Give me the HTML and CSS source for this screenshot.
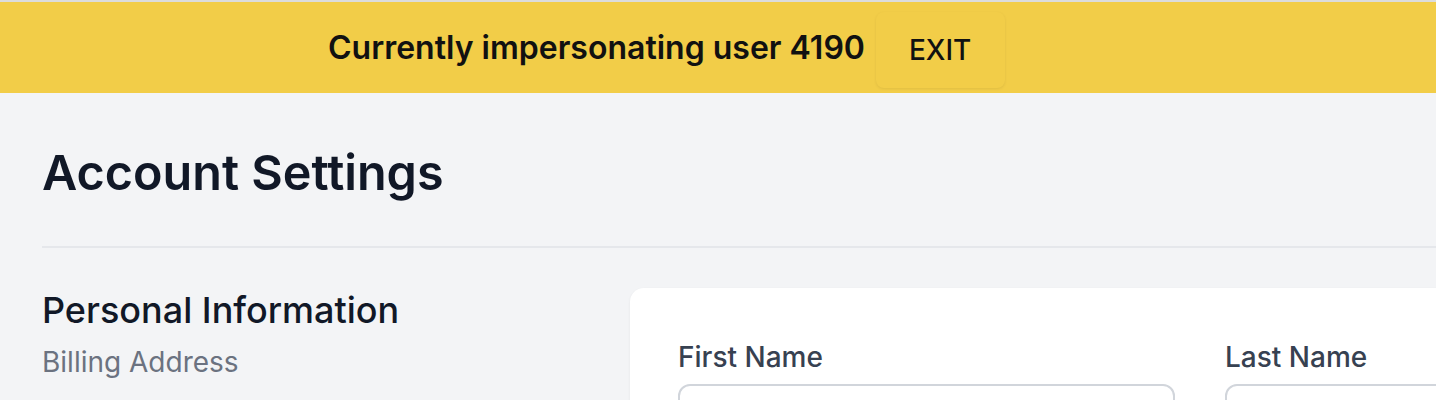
FILE: index.html
```html
<!DOCTYPE html>
<html lang="en">
<head>
    <meta charset="UTF-8">
    <meta name="viewport" content="width=device-width, initial-scale=1.0">
    <title>Account Settings</title>
    <link rel="stylesheet" href="styles.css">
</head>
<body>
    <div class="banner">
        <span class="banner-text">Currently impersonating user 4190</span>
        <button class="exit-btn" type="button">EXIT</button>
    </div>

    <div class="page">
        <h1>Account Settings</h1>
        <hr class="divider">

        <div class="section">
            <div class="section-info">
                <h2>Personal Information</h2>
                <p>Billing Address</p>
            </div>
            <div class="card">
                <div class="field">
                    <label for="firstName">First Name</label>
                    <input type="text" id="firstName">
                </div>
                <div class="field">
                    <label for="lastName">Last Name</label>
                    <input type="text" id="lastName">
                </div>
            </div>
        </div>
    </div>
</body>
</html>
```

FILE: styles.css
```css
body {
    font-family: Inter, "Noto Sans", sans-serif;
    margin: 0;
    padding: 0;
    background-color: #f3f4f6;
    color: #111827;
    overflow: hidden;
}

.banner {
    border-top: 2px solid #dcdcdc;
    background-color: #f2cd48;
    height: 93px;
    display: flex;
    align-items: center;
    gap: 11px;
    padding-left: 328px;
    box-sizing: border-box;
}
.banner-text {
    font-size: 32px;
    font-weight: 600;
    color: #111;
}
.exit-btn {
    font-family: inherit;
    font-size: 28px;
    font-weight: 500;
    color: #111;
    background-color: #f2cd48;
    border: none;
    border-radius: 8px;
    height: 76px;
    padding: 0 34px 0 33px;
    margin-top: 4px;
    box-shadow: 0 1px 3px rgba(0,0,0,0.08);
    cursor: pointer;
}

.page {
    padding: 0 42px;
    width: 1800px;
}
h1 {
    font-size: 48.5px;
    line-height: 58px;
    font-weight: 600;
    margin: 51px 0 44px;
    color: #111827;
}
.divider {
    border: none;
    border-top: 2px solid #e5e7eb;
    margin: 0;
}

.section {
    display: grid;
    grid-template-columns: 588px 1140px;
    margin-top: 40px;
}
.section-info h2 {
    font-size: 36px;
    line-height: 44px;
    font-weight: 500;
    margin: 0;
    color: #111827;
}
.section-info p {
    font-size: 28px;
    line-height: 40px;
    margin: 10px 0 0;
    color: #6b7280;
}

.card {
    background-color: white;
    border-radius: 14px;
    box-shadow: 0 1px 3px rgba(0,0,0,0.06);
    padding: 49px 48px;
    display: grid;
    grid-template-columns: 497px 497px;
    gap: 50px;
    height: 300px;
}
.field label {
    display: block;
    font-size: 28px;
    line-height: 40px;
    font-weight: 500;
    color: #374151;
    margin-bottom: 7px;
}
.field input {
    width: 100%;
    height: 76px;
    border: 2px solid #d1d5db;
    border-radius: 12px;
    box-sizing: border-box;
}
```
